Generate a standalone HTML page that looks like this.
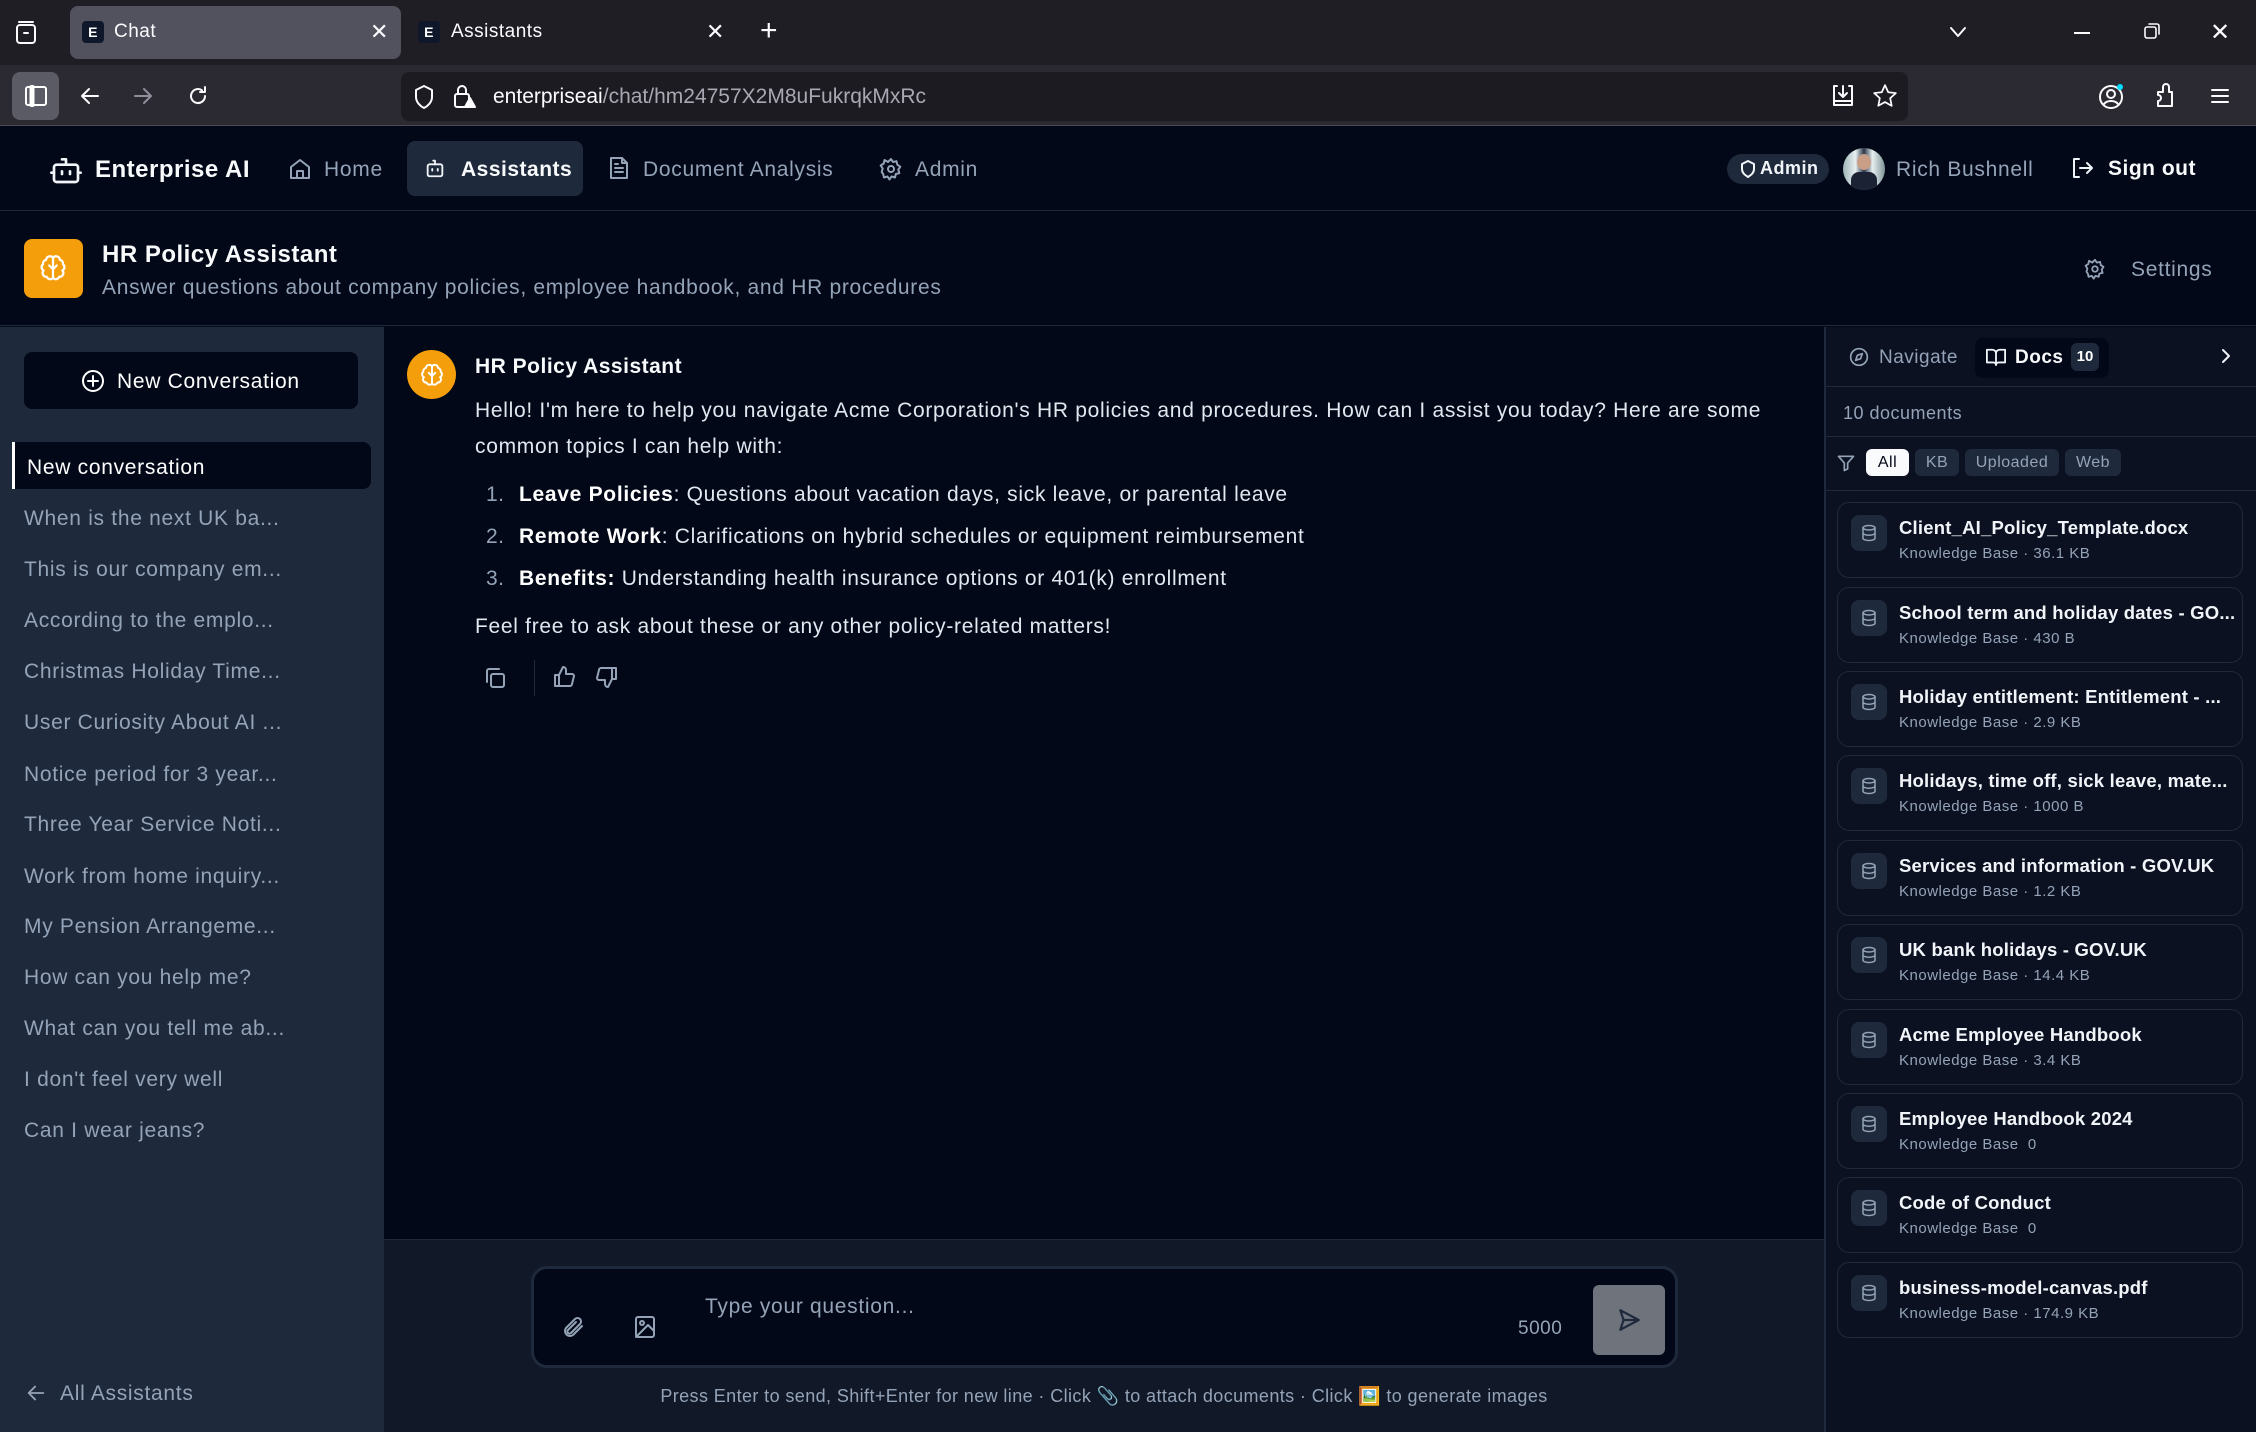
<!DOCTYPE html>
<html><head><meta charset="utf-8"><style>
*{box-sizing:border-box;margin:0;padding:0}
body{width:2256px;height:1432px;overflow:hidden;background:#020817;font-family:"Liberation Sans",sans-serif;color:#e2e8f0;position:relative;letter-spacing:0.5px}
.a{position:absolute}
svg{display:block}
.ic{fill:none;stroke:currentColor;stroke-width:2;stroke-linecap:round;stroke-linejoin:round}
.side-item{position:absolute;left:24px;font-size:21px;color:#94a3b8;white-space:nowrap;letter-spacing:0.7px}
.card{position:absolute;left:1837px;width:406px;height:76px;border:1px solid #1e293b;border-radius:12px;background:#0b1120}
.card .ib{position:absolute;left:13px;top:12px;width:36px;height:36px;border-radius:8px;background:#1e293b;color:#94a3b8}
.card .ib svg{margin:9px}
.card .t{position:absolute;left:61px;top:14px;font-size:18.5px;font-weight:bold;color:#f1f5f9;white-space:nowrap;letter-spacing:0.2px}
.card .s{position:absolute;left:61px;top:42px;font-size:15px;color:#94a3b8;white-space:nowrap}
.pill{position:absolute;top:449px;height:27px;border-radius:6px;background:#1e293b;color:#94a3b8;font-size:16px;line-height:27px;text-align:center}
.m{letter-spacing:0.7px}
</style></head><body>

<!-- browser tab bar -->
<div class="a" style="left:0;top:0;width:2256px;height:65px;background:#1f1e25"></div>
<div class="a" style="left:14px;top:20px;color:#fbfbfe"><svg width="24" height="26" viewBox="0 0 24 26" class="ic" style="stroke-width:2"><rect x="3" y="5" width="18" height="18" rx="3"/><path d="M5 2h14M10 13h4"/></svg></div>
<div class="a" style="left:70px;top:6px;width:331px;height:53px;border-radius:8px;background:#52525e"></div>
<div class="a" style="left:82px;top:21px;width:22px;height:22px;border-radius:4px;background:#0f172a;color:#fff;font-size:14px;font-weight:bold;text-align:center;line-height:22px">E</div>
<div class="a" style="left:114px;top:21px;font-size:19px;color:#fbfbfe">Chat</div>
<div class="a" style="left:370px;top:19px;font-size:22px;color:#fbfbfe">✕</div>
<div class="a" style="left:418px;top:21px;width:22px;height:22px;border-radius:4px;background:#0f172a;color:#fff;font-size:14px;font-weight:bold;text-align:center;line-height:22px">E</div>
<div class="a" style="left:451px;top:21px;font-size:19px;color:#fbfbfe">Assistants</div>
<div class="a" style="left:706px;top:19px;font-size:22px;color:#fbfbfe">✕</div>
<div class="a" style="left:760px;top:14px;font-size:30px;color:#fbfbfe;font-weight:300">+</div>
<div class="a" style="left:1948px;top:22px;color:#fbfbfe"><svg width="20" height="20" viewBox="0 0 20 20" class="ic"><path d="M3 6l7 8 7-8"/></svg></div>
<div class="a" style="left:2074px;top:32px;width:16px;height:2px;background:#fbfbfe"></div>
<div class="a" style="left:2143px;top:22px;color:#fbfbfe"><svg width="18" height="18" viewBox="0 0 18 18" class="ic" style="stroke-width:1.6"><rect x="2" y="5" width="11" height="11" rx="2"/><path d="M6 2h8a2 2 0 0 1 2 2v8"/></svg></div>
<div class="a" style="left:2210px;top:18px;font-size:24px;color:#fbfbfe">✕</div>

<!-- toolbar -->
<div class="a" style="left:0;top:65px;width:2256px;height:61px;background:#2b2a33;border-bottom:1px solid #4a4a55"></div>
<div class="a" style="left:12px;top:72px;width:47px;height:48px;border-radius:8px;background:#5b5b66"></div>
<div class="a" style="left:24px;top:85px;color:#fff"><svg width="24" height="22" viewBox="0 0 24 22" class="ic"><rect x="2" y="2" width="20" height="18" rx="2"/><path d="M8 2v18" style="stroke-width:5"/></svg></div>
<div class="a" style="left:78px;top:84px;color:#fbfbfe"><svg width="24" height="24" viewBox="0 0 24 24" class="ic"><path d="M20 12H5M11 5l-7 7 7 7"/></svg></div>
<div class="a" style="left:131px;top:84px;color:#8f8f9d"><svg width="24" height="24" viewBox="0 0 24 24" class="ic"><path d="M4 12h15M13 5l7 7-7 7"/></svg></div>
<div class="a" style="left:186px;top:84px;color:#fbfbfe"><svg width="24" height="24" viewBox="0 0 24 24" class="ic"><path d="M19 12a7 7 0 1 1-3-5.7M19 3v5h-5"/></svg></div>
<div class="a" style="left:401px;top:72px;width:1507px;height:49px;border-radius:8px;background:#1c1b22"></div>
<div class="a" style="left:412px;top:84px;color:#fbfbfe"><svg width="24" height="26" viewBox="0 0 24 26" class="ic"><path d="M12 2l8 4v7c0 5-4 9-8 11-4-2-8-6-8-11V6z"/></svg></div>
<div class="a" style="left:452px;top:82px;color:#fbfbfe"><svg width="24" height="28" viewBox="0 0 24 28" class="ic"><rect x="3" y="12" width="14" height="13" rx="2"/><path d="M6 12V8a4 4 0 0 1 8 0v4"/><path d="M18 16l5 9h-10z" fill="#fbfbfe"/></svg></div>
<div class="a" style="left:493px;top:85px;font-size:21px;color:#fbfbfe;white-space:nowrap;letter-spacing:0">enterpriseai<span style="color:#a8a8b3">/chat/hm24757X2M8uFukrqkMxRc</span></div>
<div class="a" style="left:1830px;top:83px;color:#fbfbfe"><svg width="26" height="26" viewBox="0 0 26 26" class="ic"><path d="M7 3H4v19h18V3h-3M13 3v11M9 10l4 4 4-4M4 18h18"/></svg></div>
<div class="a" style="left:1872px;top:83px;color:#fbfbfe"><svg width="26" height="26" viewBox="0 0 24 24" class="ic" style="stroke-width:1.6"><path d="M12 2l3 6.5 7 .8-5.2 4.8 1.4 7L12 17.6 5.8 21l1.4-7L2 9.3l7-.8z"/></svg></div>
<div class="a" style="left:2098px;top:82px;color:#fbfbfe"><svg width="28" height="28" viewBox="0 0 28 28" class="ic"><circle cx="13" cy="15" r="11"/><circle cx="13" cy="12" r="4"/><path d="M6 22c3-4 11-4 14 0"/><circle cx="22" cy="5" r="3" fill="#00ddff" stroke="none"/></svg></div>
<div class="a" style="left:2153px;top:82px;color:#fbfbfe"><svg width="24" height="28" viewBox="0 0 24 28" class="ic"><path d="M5 10h5V5a3 3 0 0 1 6 0v5h3v14H5v-5a3 3 0 0 0 0-6z"/></svg></div>
<div class="a" style="left:2210px;top:86px;color:#fbfbfe"><svg width="20" height="20" viewBox="0 0 20 20" class="ic"><path d="M2 4h16M2 10h16M2 16h16"/></svg></div>

<!-- app nav -->
<div class="a" style="left:0;top:126px;width:2256px;height:85px;background:#020817;border-bottom:1px solid #1e293b"></div>
<div class="a" style="left:50px;top:154px;color:#f1f5f9"><svg width="32" height="32" viewBox="0 0 24 24" class="ic"><rect x="3" y="8" width="18" height="13" rx="2"/><path d="M12 8V4h-3M9 13v2M15 13v2M1 14h2M21 14h2"/></svg></div>
<div class="a" style="left:95px;top:156px;font-size:24px;font-weight:bold;color:#f8fafc">Enterprise AI</div>
<div class="a" style="left:288px;top:157px;color:#94a3b8"><svg width="24" height="24" viewBox="0 0 24 24" class="ic"><path d="M3 10l9-7 9 7v11H3z"/><path d="M9 21v-7h6v7"/></svg></div>
<div class="a m" style="left:324px;top:158px;font-size:21px;color:#94a3b8">Home</div>
<div class="a" style="left:407px;top:141px;width:176px;height:55px;border-radius:8px;background:#1e293b"></div>
<div class="a" style="left:424px;top:157px;color:#f1f5f9"><svg width="22" height="22" viewBox="0 0 24 24" class="ic"><rect x="4" y="8" width="16" height="13" rx="2"/><path d="M12 8V4h-2M9 13v2M15 13v2"/></svg></div>
<div class="a" style="left:461px;top:158px;font-size:21px;font-weight:bold;color:#f8fafc">Assistants</div>
<div class="a" style="left:608px;top:156px;color:#94a3b8"><svg width="22" height="24" viewBox="0 0 22 24" class="ic"><path d="M3 2h11l5 5v15H3z"/><path d="M14 2v5h5M7 12h8M7 16h8M7 8h3"/></svg></div>
<div class="a m" style="left:643px;top:158px;font-size:21px;color:#94a3b8">Document Analysis</div>
<div class="a" style="left:879px;top:157px;color:#94a3b8"><svg width="24" height="24" viewBox="0 0 24 24" class="ic"><circle cx="12" cy="12" r="3"/><path d="M12 2l2 3 3.5-.8.8 3.5 3 2-2 3 1 3.5-3.5.8-.8 3.5-3.5-1-2 3-2-3-3.5 1-.8-3.5L2.7 15l1-3.5-2-3 3-2 .8-3.5L9 5z"/></svg></div>
<div class="a m" style="left:915px;top:158px;font-size:21px;color:#94a3b8">Admin</div>
<div class="a" style="left:1727px;top:154px;width:102px;height:30px;border-radius:15px;background:#1e293b"></div>
<div class="a" style="left:1740px;top:160px;color:#f1f5f9"><svg width="16" height="18" viewBox="0 0 16 18" class="ic"><path d="M8 1l6 3v5c0 4-3 6-6 8-3-2-6-4-6-8V4z"/></svg></div>
<div class="a" style="left:1760px;top:158px;font-size:18px;font-weight:bold;color:#f1f5f9">Admin</div>
<div class="a" style="left:1843px;top:148px;width:42px;height:42px;border-radius:50%;background:linear-gradient(90deg,#9fb5b8,#e7eef0 30%,#2a3548 50%,#e7eef0 70%,#7e9497);overflow:hidden"><div style="position:absolute;left:14px;top:6px;width:14px;height:16px;border-radius:50%;background:#c99e86"></div><div style="position:absolute;left:8px;top:24px;width:26px;height:20px;border-radius:8px 8px 0 0;background:#1a2233"></div></div>
<div class="a m" style="left:1896px;top:158px;font-size:21px;color:#94a3b8">Rich Bushnell</div>
<div class="a" style="left:2070px;top:156px;color:#f1f5f9"><svg width="24" height="24" viewBox="0 0 24 24" class="ic"><path d="M9 3H4v18h5M10 12h11M17 7l5 5-5 5"/></svg></div>
<div class="a" style="left:2108px;top:157px;font-size:21px;font-weight:bold;color:#f8fafc">Sign out</div>

<!-- assistant header -->
<div class="a" style="left:0;top:211px;width:2256px;height:115px;background:#020817;border-bottom:1px solid #1e293b"></div>
<div class="a" style="left:24px;top:239px;width:59px;height:59px;border-radius:8px;background:#f59e0b;color:#fff"><svg width="30" height="30" viewBox="0 0 24 24" class="ic" style="margin:14px;stroke-width:1.8"><path d="M12 4a3 3 0 0 0-5.5 1.5A3 3 0 0 0 4 9a3 3 0 0 0 .5 5A3 3 0 0 0 7 19a3 3 0 0 0 5 1 3 3 0 0 0 5-1 3 3 0 0 0 2.5-5 3 3 0 0 0 .5-5 3 3 0 0 0-2.5-3.5A3 3 0 0 0 12 4zM12 4v16M9 10l3 3 3-3"/></svg></div>
<div class="a" style="left:102px;top:241px;font-size:24px;font-weight:bold;color:#f8fafc">HR Policy Assistant</div>
<div class="a m" style="left:102px;top:276px;font-size:21px;color:#94a3b8">Answer questions about company policies, employee handbook, and HR procedures</div>
<div class="a" style="left:2084px;top:258px;color:#94a3b8"><svg width="22" height="22" viewBox="0 0 24 24" class="ic"><circle cx="12" cy="12" r="3"/><path d="M12 2l2 3 3.5-.8.8 3.5 3 2-2 3 1 3.5-3.5.8-.8 3.5-3.5-1-2 3-2-3-3.5 1-.8-3.5L2.7 15l1-3.5-2-3 3-2 .8-3.5L9 5z"/></svg></div>
<div class="a m" style="left:2131px;top:258px;font-size:21px;color:#94a3b8">Settings</div>

<!-- sidebar -->
<div class="a" style="left:0;top:327px;width:384px;height:1105px;background:#1e293b"></div>
<div class="a" style="left:24px;top:352px;width:334px;height:57px;border-radius:8px;background:#020817"></div>
<div class="a" style="left:81px;top:369px;color:#fff"><svg width="24" height="24" viewBox="0 0 24 24" class="ic"><circle cx="12" cy="12" r="10"/><path d="M12 7v10M7 12h10"/></svg></div>
<div class="a m" style="left:117px;top:370px;font-size:21px;color:#fff">New Conversation</div>
<div class="a" style="left:12px;top:442px;width:359px;height:47px;border-radius:0 8px 8px 0;background:#020817;border-left:3px solid #fff"></div>
<div class="side-item" style="top:456px;left:27px;color:#fff">New conversation</div>
<div class="side-item" style="top:507px">When is the next UK ba...</div>
<div class="side-item" style="top:558px">This is our company em...</div>
<div class="side-item" style="top:609px">According to the emplo...</div>
<div class="side-item" style="top:660px">Christmas Holiday Time...</div>
<div class="side-item" style="top:711px">User Curiosity About AI ...</div>
<div class="side-item" style="top:763px">Notice period for 3 year...</div>
<div class="side-item" style="top:813px">Three Year Service Noti...</div>
<div class="side-item" style="top:865px">Work from home inquiry...</div>
<div class="side-item" style="top:915px">My Pension Arrangeme...</div>
<div class="side-item" style="top:966px">How can you help me?</div>
<div class="side-item" style="top:1017px">What can you tell me ab...</div>
<div class="side-item" style="top:1068px">I don't feel very well</div>
<div class="side-item" style="top:1119px">Can I wear jeans?</div>
<div class="a" style="left:25px;top:1382px;color:#94a3b8"><svg width="22" height="22" viewBox="0 0 24 24" class="ic"><path d="M20 12H5M11 5l-7 7 7 7"/></svg></div>
<div class="side-item" style="left:60px;top:1382px">All Assistants</div>

<!-- chat message -->
<div class="a" style="left:407px;top:350px;width:49px;height:49px;border-radius:50%;background:#f59e0b;color:#fff"><svg width="26" height="26" viewBox="0 0 24 24" class="ic" style="margin:11.5px;stroke-width:1.8"><path d="M12 4a3 3 0 0 0-5.5 1.5A3 3 0 0 0 4 9a3 3 0 0 0 .5 5A3 3 0 0 0 7 19a3 3 0 0 0 5 1 3 3 0 0 0 5-1 3 3 0 0 0 2.5-5 3 3 0 0 0 .5-5 3 3 0 0 0-2.5-3.5A3 3 0 0 0 12 4zM12 4v16M9 10l3 3 3-3"/></svg></div>
<div class="a" style="left:475px;top:355px;font-size:21px;font-weight:bold;color:#f8fafc">HR Policy Assistant</div>
<div class="a m" style="left:475px;top:393px;width:1290px;font-size:21px;line-height:36px;color:#e2e8f0">Hello! I'm here to help you navigate Acme Corporation's HR policies and procedures. How can I assist you today? Here are some common topics I can help with:</div>
<div class="a" style="left:486px;top:483px;font-size:21px;color:#94a3b8">1.</div>
<div class="a m" style="left:519px;top:483px;font-size:21px;color:#e2e8f0;white-space:nowrap"><b style="color:#fff">Leave Policies</b>: Questions about vacation days, sick leave, or parental leave</div>
<div class="a" style="left:486px;top:525px;font-size:21px;color:#94a3b8">2.</div>
<div class="a m" style="left:519px;top:525px;font-size:21px;color:#e2e8f0;white-space:nowrap"><b style="color:#fff">Remote Work</b>: Clarifications on hybrid schedules or equipment reimbursement</div>
<div class="a" style="left:486px;top:567px;font-size:21px;color:#94a3b8">3.</div>
<div class="a m" style="left:519px;top:567px;font-size:21px;color:#e2e8f0;white-space:nowrap"><b style="color:#fff">Benefits:</b> Understanding health insurance options or 401(k) enrollment</div>
<div class="a m" style="left:475px;top:615px;font-size:21px;color:#e2e8f0">Feel free to ask about these or any other policy-related matters!</div>
<div class="a" style="left:483px;top:666px;color:#94a3b8"><svg width="24" height="24" viewBox="0 0 24 24" class="ic"><rect x="8" y="8" width="13" height="13" rx="2"/><path d="M4 16V5a2 2 0 0 1 2-2h10"/></svg></div>
<div class="a" style="left:534px;top:660px;width:1px;height:36px;background:#1e293b"></div>
<div class="a" style="left:552px;top:665px;color:#94a3b8"><svg width="24" height="24" viewBox="0 0 24 24" class="ic"><path d="M7 10v11M3 10h4v11H3zM7 10l4-8a3 3 0 0 1 3 3v4h6a2 2 0 0 1 2 2l-2 8a2 2 0 0 1-2 2H7"/></svg></div>
<div class="a" style="left:595px;top:665px;color:#94a3b8"><svg width="24" height="24" viewBox="0 0 24 24" class="ic"><path d="M17 14V3M21 14h-4V3h4zM17 14l-4 8a3 3 0 0 1-3-3v-4H4a2 2 0 0 1-2-2l2-8a2 2 0 0 1 2-2h11"/></svg></div>

<!-- input area -->
<div class="a" style="left:384px;top:1239px;width:1440px;height:193px;background:#111827;border-top:1px solid #1e293b"></div>
<div class="a" style="left:531px;top:1266px;width:1147px;height:102px;border-radius:16px;background:#020817;border:3px solid #1e293b"></div>
<div class="a" style="left:561px;top:1315px;color:#94a3b8"><svg width="24" height="24" viewBox="0 0 24 24" class="ic"><path d="M21 11l-9 9a5 5 0 0 1-7-7l9-9a3.5 3.5 0 0 1 5 5l-9 9a2 2 0 0 1-3-3l8-8"/></svg></div>
<div class="a" style="left:634px;top:1315px;color:#94a3b8"><svg width="22" height="24" viewBox="0 0 22 24" class="ic"><rect x="2" y="2" width="18" height="20" rx="2"/><circle cx="8" cy="8" r="2"/><path d="M20 16l-6-6-12 12"/></svg></div>
<div class="a m" style="left:705px;top:1295px;font-size:21px;color:#94a3b8">Type your question...</div>
<div class="a" style="left:1518px;top:1318px;font-size:19px;color:#94a3b8">5000</div>
<div class="a" style="left:1593px;top:1285px;width:72px;height:70px;border-radius:6px;background:#6f737c;color:#1e293b"><svg width="26" height="26" viewBox="0 0 24 24" class="ic" style="margin:22px 23px"><path d="M4 3l17 9-17 9 3-9zM7 12h14"/></svg></div>
<div class="a" style="left:384px;width:1440px;top:1386px;text-align:center;font-size:18px;color:#94a3b8;letter-spacing:0.4px">Press Enter to send, Shift+Enter for new line · Click 📎 to attach documents · Click 🖼️ to generate images</div>

<!-- right panel -->
<div class="a" style="left:1824px;top:327px;width:432px;height:1105px;background:#0b1120;border-left:2px solid #1e293b"></div>
<div class="a" style="left:1826px;top:386px;width:430px;height:1px;background:#1e293b"></div>
<div class="a" style="left:1849px;top:347px;color:#94a3b8"><svg width="20" height="20" viewBox="0 0 24 24" class="ic"><circle cx="12" cy="12" r="10"/><path d="M16 8l-2 6-6 2 2-6z"/></svg></div>
<div class="a" style="left:1879px;top:347px;font-size:19px;color:#94a3b8">Navigate</div>
<div class="a" style="left:1975px;top:338px;width:134px;height:40px;border-radius:8px;background:#020817"></div>
<div class="a" style="left:1985px;top:347px;color:#f1f5f9"><svg width="22" height="20" viewBox="0 0 24 22" class="ic"><path d="M2 3h6a4 4 0 0 1 4 4v13a3 3 0 0 0-3-3H2zM22 3h-6a4 4 0 0 0-4 4v13a3 3 0 0 1 3-3h7z"/></svg></div>
<div class="a" style="left:2015px;top:347px;font-size:19px;font-weight:bold;color:#f8fafc">Docs</div>
<div class="a" style="left:2071px;top:343px;width:28px;height:28px;border-radius:6px;background:#1e293b;font-size:15px;font-weight:bold;color:#fff;text-align:center;line-height:28px;letter-spacing:0">10</div>
<div class="a" style="left:2216px;top:346px;color:#f1f5f9"><svg width="20" height="20" viewBox="0 0 20 20" class="ic"><path d="M7 4l6 6-6 6"/></svg></div>
<div class="a" style="left:1843px;top:403px;font-size:18px;color:#94a3b8">10 documents</div>
<div class="a" style="left:1826px;top:436px;width:430px;height:1px;background:#1e293b"></div>
<div class="a" style="left:1836px;top:453px;color:#94a3b8"><svg width="20" height="20" viewBox="0 0 24 24" class="ic"><path d="M3 4h18l-7 8v7l-4 2v-9z"/></svg></div>
<div class="pill" style="left:1866px;width:43px;background:#f8fafc;color:#020817">All</div>
<div class="pill" style="left:1915px;width:44px">KB</div>
<div class="pill" style="left:1965px;width:94px">Uploaded</div>
<div class="pill" style="left:2065px;width:56px">Web</div>
<div class="a" style="left:1826px;top:490px;width:430px;height:1px;background:#1e293b"></div>

<div class="card" style="top:502px"><div class="ib"><svg width="18" height="18" viewBox="0 0 24 24" class="ic"><ellipse cx="12" cy="5" rx="8" ry="3"/><path d="M4 5v14c0 1.7 3.6 3 8 3s8-1.3 8-3V5M4 12c0 1.7 3.6 3 8 3s8-1.3 8-3"/></svg></div><div class="t">Client_AI_Policy_Template.docx</div><div class="s">Knowledge Base · 36.1 KB</div></div>
<div class="card" style="top:587px"><div class="ib"><svg width="18" height="18" viewBox="0 0 24 24" class="ic"><ellipse cx="12" cy="5" rx="8" ry="3"/><path d="M4 5v14c0 1.7 3.6 3 8 3s8-1.3 8-3V5M4 12c0 1.7 3.6 3 8 3s8-1.3 8-3"/></svg></div><div class="t">School term and holiday dates - GO...</div><div class="s">Knowledge Base · 430 B</div></div>
<div class="card" style="top:671px"><div class="ib"><svg width="18" height="18" viewBox="0 0 24 24" class="ic"><ellipse cx="12" cy="5" rx="8" ry="3"/><path d="M4 5v14c0 1.7 3.6 3 8 3s8-1.3 8-3V5M4 12c0 1.7 3.6 3 8 3s8-1.3 8-3"/></svg></div><div class="t">Holiday entitlement: Entitlement - ...</div><div class="s">Knowledge Base · 2.9 KB</div></div>
<div class="card" style="top:755px"><div class="ib"><svg width="18" height="18" viewBox="0 0 24 24" class="ic"><ellipse cx="12" cy="5" rx="8" ry="3"/><path d="M4 5v14c0 1.7 3.6 3 8 3s8-1.3 8-3V5M4 12c0 1.7 3.6 3 8 3s8-1.3 8-3"/></svg></div><div class="t">Holidays, time off, sick leave, mate...</div><div class="s">Knowledge Base · 1000 B</div></div>
<div class="card" style="top:840px"><div class="ib"><svg width="18" height="18" viewBox="0 0 24 24" class="ic"><ellipse cx="12" cy="5" rx="8" ry="3"/><path d="M4 5v14c0 1.7 3.6 3 8 3s8-1.3 8-3V5M4 12c0 1.7 3.6 3 8 3s8-1.3 8-3"/></svg></div><div class="t">Services and information - GOV.UK</div><div class="s">Knowledge Base · 1.2 KB</div></div>
<div class="card" style="top:924px"><div class="ib"><svg width="18" height="18" viewBox="0 0 24 24" class="ic"><ellipse cx="12" cy="5" rx="8" ry="3"/><path d="M4 5v14c0 1.7 3.6 3 8 3s8-1.3 8-3V5M4 12c0 1.7 3.6 3 8 3s8-1.3 8-3"/></svg></div><div class="t">UK bank holidays - GOV.UK</div><div class="s">Knowledge Base · 14.4 KB</div></div>
<div class="card" style="top:1009px"><div class="ib"><svg width="18" height="18" viewBox="0 0 24 24" class="ic"><ellipse cx="12" cy="5" rx="8" ry="3"/><path d="M4 5v14c0 1.7 3.6 3 8 3s8-1.3 8-3V5M4 12c0 1.7 3.6 3 8 3s8-1.3 8-3"/></svg></div><div class="t">Acme Employee Handbook</div><div class="s">Knowledge Base · 3.4 KB</div></div>
<div class="card" style="top:1093px"><div class="ib"><svg width="18" height="18" viewBox="0 0 24 24" class="ic"><ellipse cx="12" cy="5" rx="8" ry="3"/><path d="M4 5v14c0 1.7 3.6 3 8 3s8-1.3 8-3V5M4 12c0 1.7 3.6 3 8 3s8-1.3 8-3"/></svg></div><div class="t">Employee Handbook 2024</div><div class="s">Knowledge Base&nbsp; 0</div></div>
<div class="card" style="top:1177px"><div class="ib"><svg width="18" height="18" viewBox="0 0 24 24" class="ic"><ellipse cx="12" cy="5" rx="8" ry="3"/><path d="M4 5v14c0 1.7 3.6 3 8 3s8-1.3 8-3V5M4 12c0 1.7 3.6 3 8 3s8-1.3 8-3"/></svg></div><div class="t">Code of Conduct</div><div class="s">Knowledge Base&nbsp; 0</div></div>
<div class="card" style="top:1262px"><div class="ib"><svg width="18" height="18" viewBox="0 0 24 24" class="ic"><ellipse cx="12" cy="5" rx="8" ry="3"/><path d="M4 5v14c0 1.7 3.6 3 8 3s8-1.3 8-3V5M4 12c0 1.7 3.6 3 8 3s8-1.3 8-3"/></svg></div><div class="t">business-model-canvas.pdf</div><div class="s">Knowledge Base · 174.9 KB</div></div>

</body></html>
